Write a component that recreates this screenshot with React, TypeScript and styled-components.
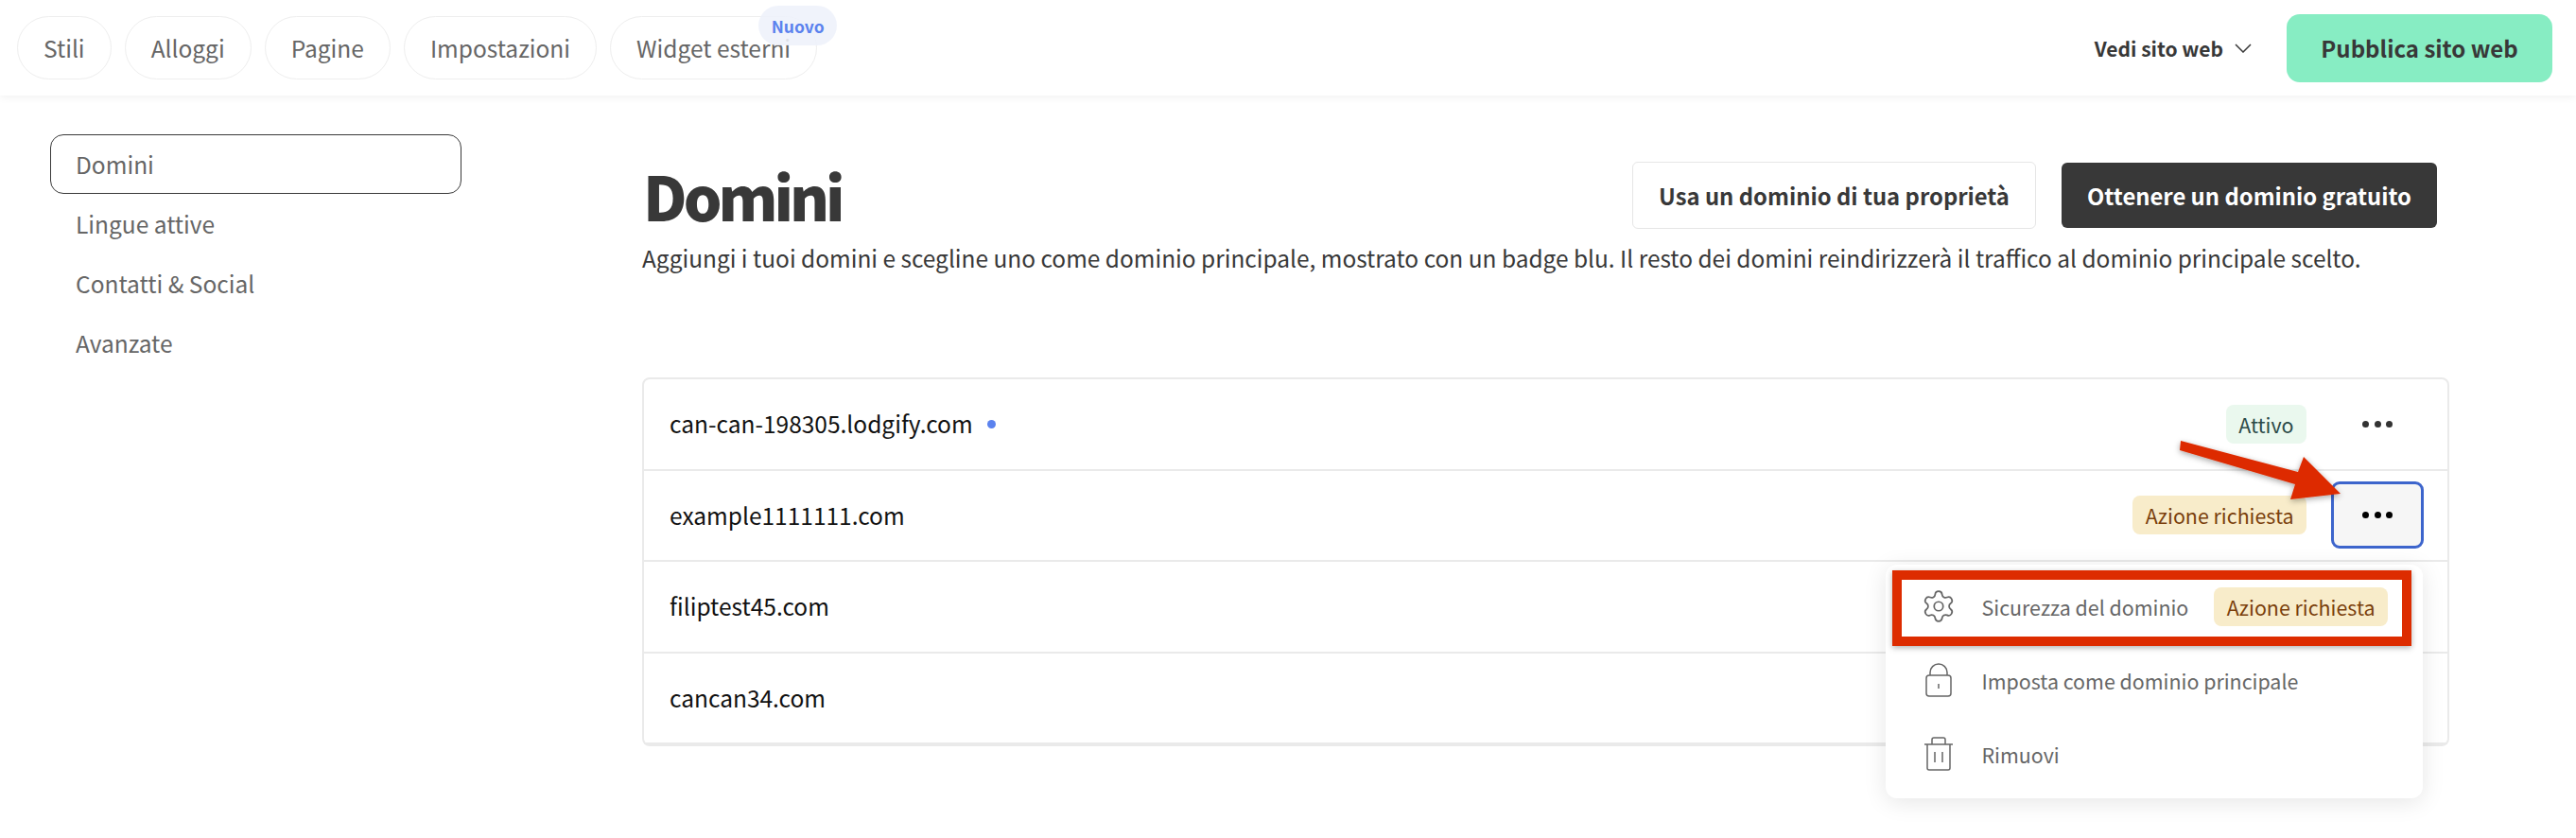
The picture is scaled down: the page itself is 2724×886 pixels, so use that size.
import * as React from "react";
import styled, { createGlobalStyle } from "styled-components";
import { Settings } from "lucide-react";

const GlobalStyle = createGlobalStyle`
	html, body {
		margin: 0;
		padding: 0;
		background: #fff;
		overflow: hidden;
	}
	* {
		box-sizing: border-box;
	}
	body {
		font-family: "Noto Sans CJK SC", "Open Sans", sans-serif;
	}
`;

const Page = styled.div`
	position: relative;
	width: 2724px;
	height: 886px;
	background: #fff;
	overflow: hidden;
`;

const Header = styled.header`
	display: flex;
	justify-content: space-between;
	align-items: center;
	height: 101px;
	padding: 0 25px 0 18px;
	background: #fff;
	box-shadow: 0 2px 8px rgba(0, 0, 0, 0.06);
`;

const Tabs = styled.nav`
	display: flex;
	gap: 14px;
`;

const Tab = styled.div`
	position: relative;
	display: flex;
	align-items: center;
	height: 67px;
	padding: 0 27px;
	border: 1px solid #eeeeee;
	border-radius: 34px;
	font-size: 24.5px;
	color: #666;
`;

const NewBadge = styled.span`
	position: absolute;
	top: -12px;
	right: -22px;
	width: 83px;
	height: 42px;
	display: flex;
	align-items: center;
	justify-content: center;
	border-radius: 21px;
	background: rgba(238, 241, 251, 0.88);
	color: #5b82ee;
	font-size: 17.5px;
	font-weight: 700;
`;

const HeaderActions = styled.div`
	display: flex;
	align-items: center;
`;

const SiteLink = styled.div`
	display: flex;
	align-items: center;
	gap: 12px;
	margin-right: 37px;
	font-size: 21px;
	font-weight: 700;
	color: #383838;
`;

const PublishButton = styled.button`
	width: 281px;
	height: 72px;
	border: 0;
	border-radius: 14px;
	background: #87edc3;
	color: #383838;
	font-family: inherit;
	font-size: 24px;
	font-weight: 700;
`;

const Body = styled.div`
	display: flex;
	padding: 41px 134px 0 53px;
`;

const Sidebar = styled.aside`
	display: flex;
	flex-direction: column;
	width: 435px;
	margin-right: 191px;
	flex-shrink: 0;
`;

const SideItem = styled.div<{ $active?: boolean }>`
	display: flex;
	align-items: center;
	height: 63px;
	padding: 0 26px;
	border: 1px solid ${(p) => (p.$active ? "#3a3a3a" : "transparent")};
	border-radius: 14px;
	font-size: 24.5px;
	color: #666;
`;

const Main = styled.main`
	flex: 1;
	min-width: 0;
`;

const TitleRow = styled.div`
	display: flex;
	justify-content: space-between;
	align-items: center;
	height: 71px;
	margin-top: 29px;
	padding-right: 13px;
`;

const Title = styled.h1`
	margin: 0 0 0 1px;
	font-size: 64px;
	line-height: 71px;
	font-weight: 900;
	letter-spacing: -4px;
	color: #383838;
`;

const TitleActions = styled.div`
	display: flex;
	gap: 27px;
	align-items: center;
`;

const OutlineButton = styled.button`
	width: 427px;
	height: 71px;
	border: 1px solid #e6e6e6;
	border-radius: 6px;
	background: #fff;
	color: #383838;
	font-family: inherit;
	font-size: 23.8px;
	font-weight: 700;
`;

const DarkButton = styled.button`
	width: 397px;
	height: 69px;
	border: 0;
	border-radius: 6px;
	background: #383838;
	color: #fff;
	font-family: inherit;
	font-size: 23.8px;
	font-weight: 700;
`;

const Subtitle = styled.p`
	margin: 14px 0 0;
	font-size: 24.45px;
	line-height: 34px;
	color: #383838;
	white-space: nowrap;
`;

const DomainTable = styled.div`
	position: relative;
	margin-top: 109px;
	border: 2px solid #eaeaea;
	border-radius: 8px;
`;

const Row = styled.div`
	display: flex;
	align-items: center;
	height: 96.5px;
	padding: 0 25px 0 27px;
	border-bottom: 2px solid #eaeaea;
	&:last-child {
		border-bottom: 0;
	}
`;

const DomainName = styled.span`
	margin-bottom: 1px;
	font-size: 24.5px;
	color: #111;
`;

const PrimaryDot = styled.span`
	width: 9px;
	height: 9px;
	margin-left: 15px;
	border-radius: 50%;
	background: #5b82ee;
`;

const RowEnd = styled.div`
	display: flex;
	align-items: center;
	margin-left: auto;
`;

const Badge = styled.span<{ $tone: "ok" | "warn" }>`
	display: inline-flex;
	align-items: center;
	justify-content: center;
	height: 41px;
	padding: 0 13.5px;
	border-radius: 8px;
	font-size: 21.4px;
	white-space: nowrap;
	background: ${(p) => (p.$tone === "ok" ? "#eaf8ee" : "#f8ecca")};
	color: ${(p) => (p.$tone === "ok" ? "#2c4a48" : "#7a3f0c")};
`;

const MoreButton = styled.div<{ $focused?: boolean }>`
	display: flex;
	align-items: center;
	justify-content: center;
	gap: 5.5px;
	width: 98px;
	height: 71px;
	margin-left: 26px;
	border: 3px solid ${(p) => (p.$focused ? "#3d65cc" : "transparent")};
	border-radius: 9px;
	background: ${(p) => (p.$focused ? "#f6f6f6" : "transparent")};
`;

const Dot = styled.i<{ $dark?: boolean }>`
	width: 7px;
	height: 7px;
	border-radius: 50%;
	background: ${(p) => (p.$dark ? "#000" : "#333")};
`;

const Menu = styled.div`
	position: absolute;
	top: 196px;
	right: 26px;
	width: 568px;
	height: 247px;
	padding-top: 6px;
	border-radius: 12px;
	background: #fff;
	box-shadow: 0 4px 24px rgba(0, 0, 0, 0.1);
`;

const MenuItem = styled.div`
	position: relative;
	display: flex;
	align-items: center;
	height: 78px;
	padding: 0 0 2px 37px;
	font-size: 21.4px;
	color: #666;
	white-space: nowrap;
`;

const MenuIcon = styled.span`
	display: flex;
	justify-content: center;
	width: 44px;
	margin-right: 23.5px;
	margin-left: -3px;
	color: #666;
`;

const MenuBadge = styled(Badge)`
	margin-left: 27px;
`;

const Highlight = styled.div`
	position: absolute;
	top: 0;
	left: 7px;
	width: 549px;
	height: 80px;
	border: 10px solid #dd2c00;
	box-shadow: 0 2px 6px rgba(0, 0, 0, 0.3);
`;

const Arrow = styled.svg`
	position: absolute;
	left: 2290px;
	top: 460px;
	overflow: visible;
`;

const LockIcon = () => (
	<svg width="30" height="36" viewBox="0 0 30 36" fill="none" stroke="currentColor" strokeWidth="1.5">
		<rect x="2" y="13" width="26" height="22" rx="3" />
		<path d="M6 13V10a9 9 0 0 1 18 0v3" />
		<path d="M15 22v5" />
	</svg>
);

const TrashIcon = () => (
	<svg width="32" height="36" viewBox="0 0 32 36" fill="none" stroke="currentColor" strokeWidth="1.5">
		<path d="M1 8h30" />
		<path d="M9 8V3a2 2 0 0 1 2-2h10a2 2 0 0 1 2 2v5" />
		<path d="M4 8v25a2 2 0 0 0 2 2h20a2 2 0 0 0 2-2V8" />
		<path d="M12 16v11M20 16v11" />
	</svg>
);

const tabs = ["Stili", "Alloggi", "Pagine", "Impostazioni"];
const sections = ["Domini", "Lingue attive", "Contatti & Social", "Avanzate"];

function More({ focused }: { focused?: boolean }) {
	return (
		<MoreButton $focused={focused}>
			<Dot $dark={focused} />
			<Dot $dark={focused} />
			<Dot $dark={focused} />
		</MoreButton>
	);
}

export default function App() {
	return (
		<Page>
			<GlobalStyle />
			<Header>
				<Tabs>
					{tabs.map((t) => (
						<Tab key={t}>{t}</Tab>
					))}
					<Tab>
						Widget esterni
						<NewBadge>Nuovo</NewBadge>
					</Tab>
				</Tabs>
				<HeaderActions>
					<SiteLink>
						Vedi sito web
						<svg width="18" height="10" viewBox="0 0 18 10" fill="none" stroke="#383838" strokeWidth="1.5">
							<path d="M1 1l8 8 8-8" />
						</svg>
					</SiteLink>
					<PublishButton>Pubblica sito web</PublishButton>
				</HeaderActions>
			</Header>
			<Body>
				<Sidebar>
					{sections.map((s, i) => (
						<SideItem key={s} $active={i === 0}>
							{s}
						</SideItem>
					))}
				</Sidebar>
				<Main>
					<TitleRow>
						<Title>Domini</Title>
						<TitleActions>
							<OutlineButton>Usa un dominio di tua proprietà</OutlineButton>
							<DarkButton>Ottenere un dominio gratuito</DarkButton>
						</TitleActions>
					</TitleRow>
					<Subtitle>
						Aggiungi i tuoi domini e scegline uno come dominio principale, mostrato con un badge blu. Il resto dei domini
						reindirizzerà il traffico al dominio principale scelto.
					</Subtitle>
					<DomainTable>
						<Row>
							<DomainName>can-can-198305.lodgify.com</DomainName>
							<PrimaryDot />
							<RowEnd>
								<Badge $tone="ok">Attivo</Badge>
								<More />
							</RowEnd>
						</Row>
						<Row>
							<DomainName>example1111111.com</DomainName>
							<RowEnd>
								<Badge $tone="warn">Azione richiesta</Badge>
								<More focused />
							</RowEnd>
						</Row>
						<Row>
							<DomainName>filiptest45.com</DomainName>
						</Row>
						<Row>
							<DomainName>cancan34.com</DomainName>
						</Row>
						<Menu>
							<MenuItem>
								<MenuIcon>
									<Settings size={38} strokeWidth={1.1} />
								</MenuIcon>
								Sicurezza del dominio
								<MenuBadge $tone="warn">Azione richiesta</MenuBadge>
								<Highlight />
							</MenuItem>
							<MenuItem>
								<MenuIcon>
									<LockIcon />
								</MenuIcon>
								Imposta come dominio principale
							</MenuItem>
							<MenuItem>
								<MenuIcon>
									<TrashIcon />
								</MenuIcon>
								Rimuovi
							</MenuItem>
						</Menu>
					</DomainTable>
				</Main>
			</Body>
			<Arrow width="200" height="80" viewBox="0 0 200 80">
				<defs>
					<filter id="arrowShadow" x="-20%" y="-40%" width="140%" height="180%">
						<feDropShadow dx="0" dy="2" stdDeviation="3" floodOpacity="0.35" />
					</filter>
				</defs>
				<path d="M16 6L15 16L137 52L132 68L185 62L146 23L140 39Z" fill="#dd2c00" filter="url(#arrowShadow)" />
			</Arrow>
		</Page>
	);
}
